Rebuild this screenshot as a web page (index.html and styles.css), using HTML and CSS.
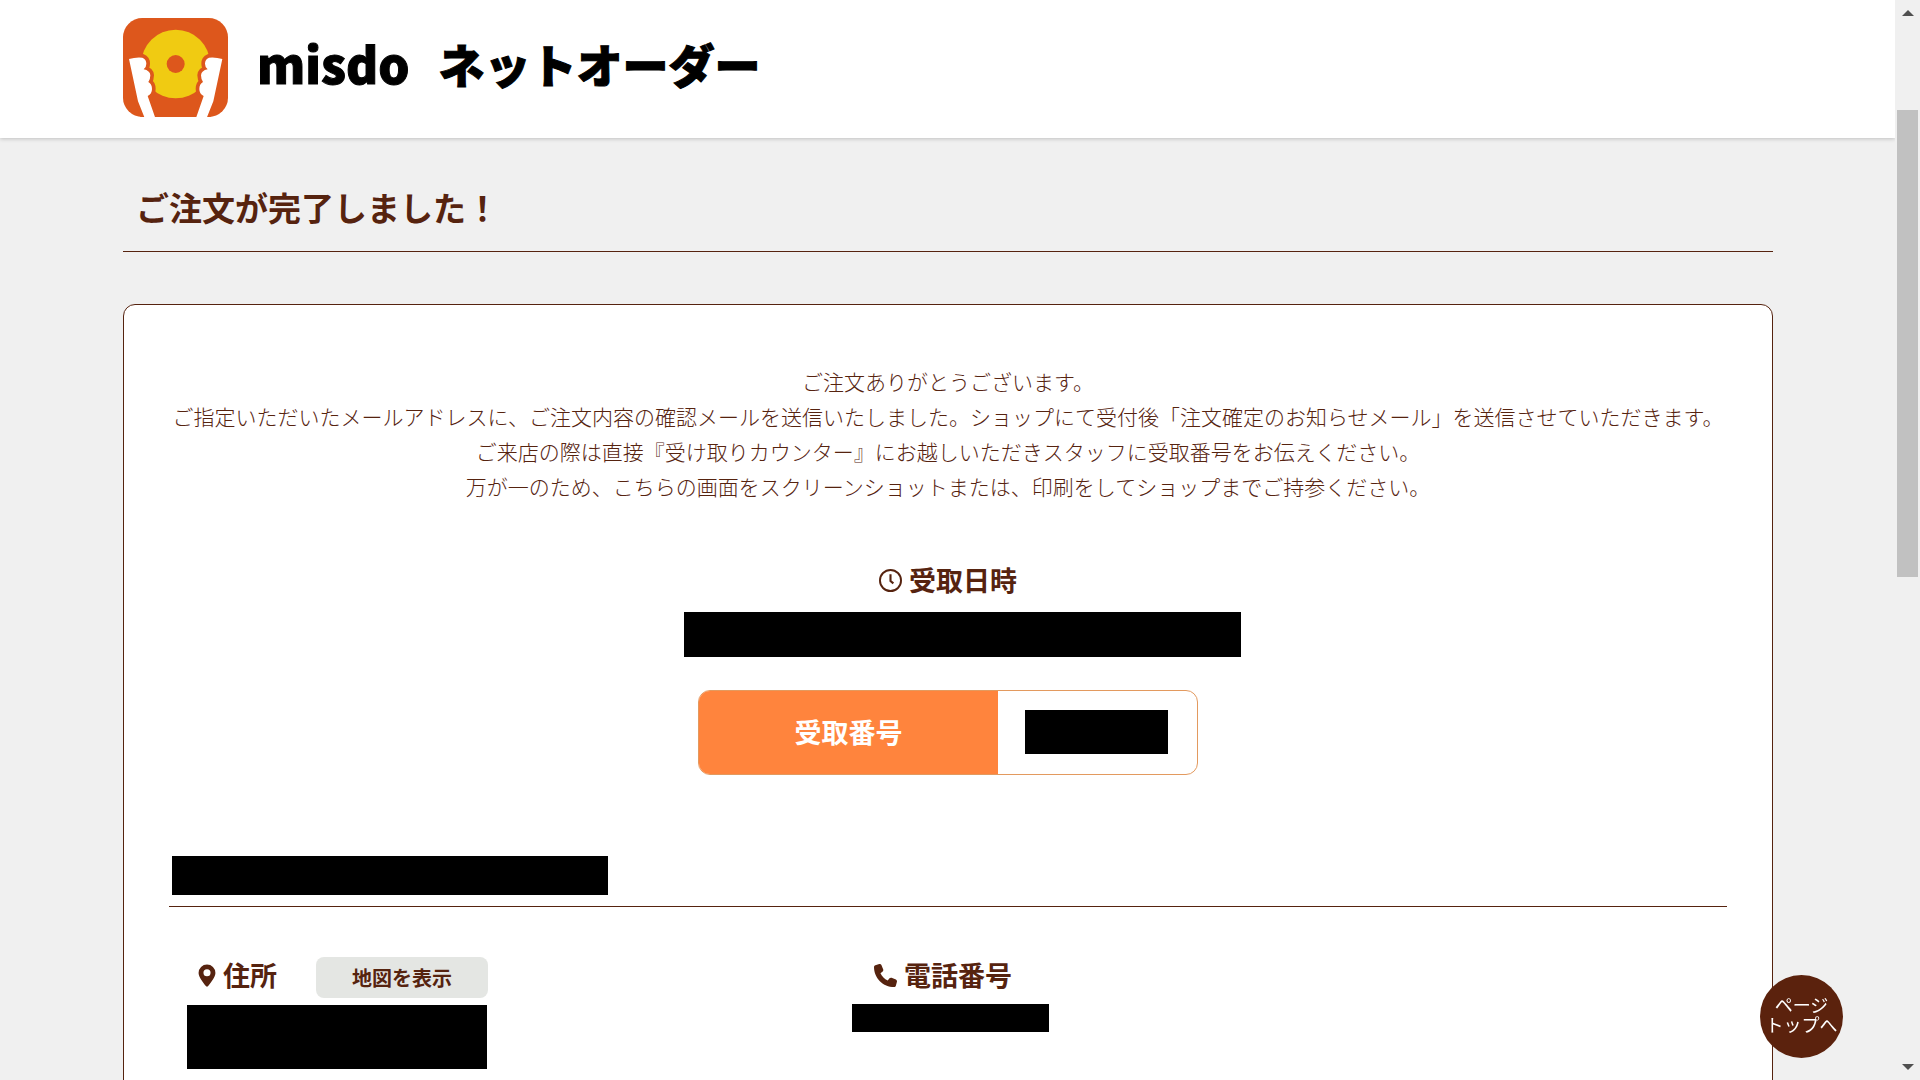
FILE: index.html
```html
<!DOCTYPE html>
<html lang="ja">
<head>
<meta charset="utf-8">
<meta name="viewport" content="width=device-width, initial-scale=1">
<title>misdo ネットオーダー</title>
<link rel="stylesheet" href="styles.css">
</head>
<body>
<div class="page">
	<header class="header">
		<a class="logo" href="#">
			<svg class="logo-mark" viewBox="0 0 315 297" aria-hidden="true">
				<defs>
					<clipPath id="mark"><rect width="315" height="297" rx="58"/></clipPath>
					<path id="hand" d="M18 123 Q38 117 58 119 Q70 124 70 137 Q70 148 62 154 Q81 158 82 172 Q82 184 76 192 Q87 198 87 213 Q87 228 74 234 L97 300 H65 L45 250 Z"/>
				</defs>
				<g clip-path="url(#mark)">
					<rect width="315" height="297" fill="#dd571c"/>
					<circle cx="158" cy="138" r="103" fill="#f0cb12"/>
					<circle cx="158" cy="138" r="27" fill="#dd571c"/>
					<use href="#hand" class="hand"/>
					<use href="#hand" class="hand" transform="matrix(-1 0 0 1 316 0)"/>
				</g>
			</svg>
			<span class="logo-en">misdo</span>
			<span class="logo-ja">ネットオーダー</span>
		</a>
	</header>
	<main class="main">
		<h1 class="title">ご注文が完了しました！</h1>
		<section class="card">
			<p class="message">
				ご注文ありがとうございます。<br>
				ご指定いただいたメールアドレスに、ご注文内容の確認メールを送信いたしました。ショップにて受付後「注文確定のお知らせメール」を送信させていただきます。<br>
				ご来店の際は直接『受け取りカウンター』にお越しいただきスタッフに受取番号をお伝えください。<br>
				万が一のため、こちらの画面をスクリーンショットまたは、印刷をしてショップまでご持参ください。
			</p>
			<div class="pickup">
				<h2 class="label">
					<svg class="icon" viewBox="0 0 24 24" fill="none" stroke="currentColor" stroke-width="2" aria-hidden="true"><circle cx="12" cy="12" r="11"/><path d="M12 5.5V12.5L15 15" stroke-width="2.2"/></svg>
					受取日時
				</h2>
				<div class="mask mask-date"></div>
				<div class="number">
					<div class="number-name">受取番号</div>
					<div class="number-value"><div class="mask mask-number"></div></div>
				</div>
			</div>
			<div class="shop"><div class="mask mask-shop"></div></div>
			<div class="info">
				<div class="address">
					<div class="row">
						<h2 class="label">
							<svg class="icon icon-pin" viewBox="0 0 18 24" fill="currentColor" aria-hidden="true"><path fill-rule="evenodd" d="M9 0.5a8.8 8.8 0 0 0-8.8 8.8C.2 13.5 5 19.5 8.1 23.2a1.2 1.2 0 0 0 1.8 0C13 19.5 17.8 13.5 17.8 9.300A8.800 8.800 0 0 0 9 .5zM9 5.500a3.700 3.700 0 1 1 0 7.400a3.700 3.700 0 0 1 0-7.400z"/></svg>
							住所
						</h2>
						<button class="map" type="button">地図を表示</button>
					</div>
					<div class="mask mask-address"></div>
				</div>
				<div class="tel">
					<div class="row">
						<h2 class="label">
							<svg class="icon" viewBox="0 0 512 512" fill="currentColor" aria-hidden="true"><path d="M164.900 24.600c-7.700-18.600-28-28.500-47.400-23.200l-88 24C12.100 30.200 0 46 0 64c0 247.400 200.600 448 448 448 18 0 33.800-12.100 38.600-29.500l24-88c5.300-19.400-4.600-39.700-23.200-47.400l-96-40c-16.300-6.800-35.200-2.100-46.300 11.600L304.700 368C234.300 334.700 177.300 277.700 144 207.300l49.300-40.300c13.700-11.200 18.400-30 11.600-46.300z"/></svg>
							電話番号
						</h2>
					</div>
					<div class="mask mask-tel"></div>
				</div>
			</div>
		</section>
	</main>
</div>
<div class="scrollbar" aria-hidden="true">
	<svg class="arrow" viewBox="0 0 12 6"><path d="M0 6L6 0L12 6z"/></svg>
	<div class="track"><div class="thumb"></div></div>
	<svg class="arrow" viewBox="0 0 12 6"><path d="M0 0H12L6 6z"/></svg>
</div>
<a class="pagetop" href="#">ページ<br>トップへ</a>
</body>
</html>
```
FILE: styles.css
```css
*{margin:0;padding:0;box-sizing:border-box;}
body{display:flex;height:100vh;overflow:hidden;background:#f0f0f0;color:#56230f;font-family:"Noto Sans CJK JP",sans-serif;}
.page{flex:1;min-width:0;overflow:hidden;}

/* header */
.header{padding:18px 122px 21px 123px;background:#fff;box-shadow:0 1px 4px rgba(0,0,0,.2);}
.logo{display:flex;align-items:flex-start;color:#000;text-decoration:none;font-weight:900;line-height:90px;-webkit-text-stroke:1px #000;}
.logo-mark{width:105px;height:99px;margin-right:29px;}
.hand{fill:#fff;stroke:#dd571c;stroke-width:22px;paint-order:stroke;}
.logo-en{margin-right:29px;font-size:49px;}
.logo-ja{font-size:46px;}

/* main */
.main{padding:0 122px 0 123px;}
.title{padding:45px 13px 19px;border-bottom:1px solid #56230f;font-size:33px;line-height:49px;}
.card{margin-top:52px;padding:59px 45px;border:1px solid #56230f;border-radius:12px;background:#fff;}
.message{font-size:21px;font-weight:300;line-height:35px;text-align:center;}
.label{display:flex;align-items:center;gap:7px;font-size:27px;line-height:40px;}
.icon{width:23px;height:23px;}
.icon-pin{width:18px;}
.mask{background:#000;}

.pickup{display:flex;flex-direction:column;align-items:center;margin-top:56px;}
.mask-date{width:557px;height:45px;margin:12px 0 33px 28px;}
.number{display:flex;width:500px;height:85px;border:1px solid #e39a5f;border-radius:12px;overflow:hidden;}
.number-name{width:60%;background:#ff843d;color:#fff;font-size:27px;font-weight:bold;line-height:82px;text-align:center;}
.number-value{width:40%;padding:19px 27px;}
.mask-number{width:143px;height:44px;}

.shop{margin-top:81px;padding:0 3px 11px;border-bottom:1px solid #56230f;}
.mask-shop{width:436px;height:39px;}
.info{display:grid;grid-template-columns:665px 1fr;margin-top:50px;padding:0 18px;}
.row{display:flex;gap:39px;height:41px;padding-left:11px;}
.row .label{height:36px;}
.map{width:172px;border:0;border-radius:8px;background:#e4e6e3;color:#56230f;font-family:inherit;font-size:20px;font-weight:bold;cursor:pointer;}
.mask-address{width:300px;height:64px;margin-top:7px;}
.tel .row{padding-left:22px;}
.mask-tel{width:197px;height:28px;margin-top:6px;}

.pagetop{position:fixed;right:77px;bottom:22px;width:83px;height:83px;padding-top:19px;border-radius:50%;background:#5b220d;color:#fff;font-size:18px;line-height:20px;text-align:center;text-decoration:none;}

/* scroll bar */
.scrollbar{display:flex;flex-direction:column;align-items:center;width:25px;padding:10px 0;background:#f0f0f0;}
.arrow{width:12px;height:6px;fill:#505050;}
.track{flex:1;width:21px;padding-top:94px;}
.thumb{height:49%;background:#c1c1c1;}
```
